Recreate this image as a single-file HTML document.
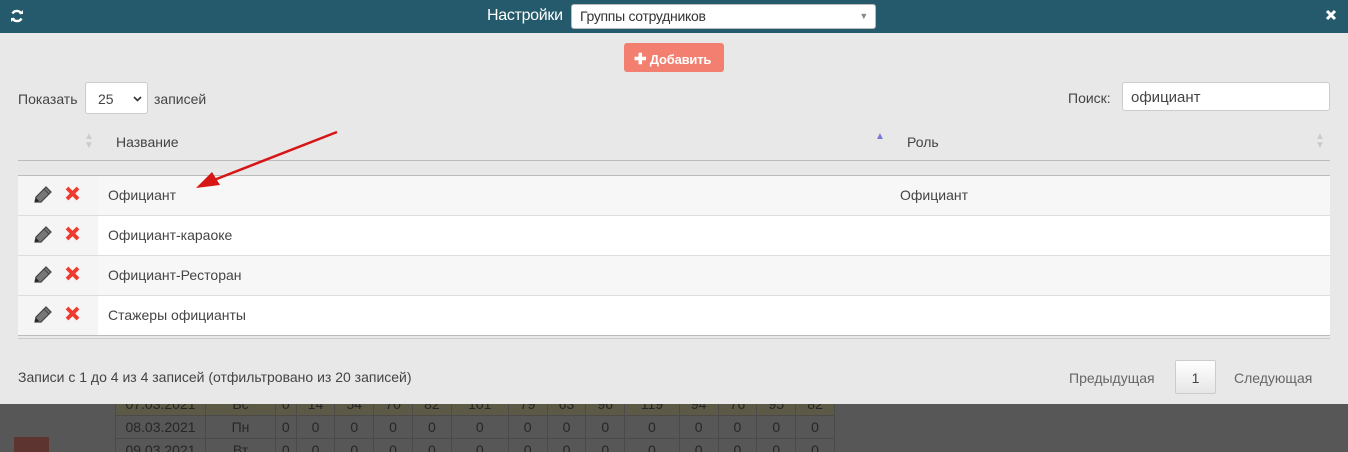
<!DOCTYPE html>
<html><head><meta charset="utf-8"><style>
*{box-sizing:border-box;margin:0;padding:0}
html,body{width:1348px;height:452px;overflow:hidden;background:#575757}
body{font-family:"Liberation Sans",Arial,sans-serif;font-size:14px;color:#444;position:relative}
.hdr{position:absolute;left:0;top:0;width:1348px;height:33px;background:#245a6b}
.modal{position:absolute;left:0;top:33px;width:1348px;height:371px;background:#e8e8e8}
.abs{position:absolute}
.tbl{position:absolute;left:18px;width:1312px}
.row{position:absolute;left:18px;width:1312px;height:40px;border-top:1px solid #ddd}
.row .c1{position:absolute;left:0;top:0;width:80px;height:39px;background:#f5f5f5}
.row span{position:absolute;top:11px;font-size:14px;color:#444}
.bg{border-collapse:collapse}
.bg td{border:1px solid #4a4a4a;color:#262626;text-align:center;font-size:14px;height:23px;background:#575757}
.bg tr.y td{background:#5c5946}
</style></head><body>
<div class="abs" style="left:0;top:404px;width:1348px;height:48px;background:#575757"></div>
<table class="bg abs" style="left:115px;top:392px;width:720px">
<tr class="y"><td style="width:90px">07.03.2021</td><td style="width:70px">Вс</td><td>0</td><td>14</td><td>54</td><td>70</td><td>82</td><td>101</td><td>79</td><td>63</td><td>96</td><td>119</td><td>94</td><td>76</td><td>95</td><td>82</td></tr>
<tr><td>08.03.2021</td><td>Пн</td><td>0</td><td>0</td><td>0</td><td>0</td><td>0</td><td>0</td><td>0</td><td>0</td><td>0</td><td>0</td><td>0</td><td>0</td><td>0</td><td>0</td></tr>
<tr><td>09.03.2021</td><td>Вт</td><td>0</td><td>0</td><td>0</td><td>0</td><td>0</td><td>0</td><td>0</td><td>0</td><td>0</td><td>0</td><td>0</td><td>0</td><td>0</td><td>0</td></tr>
</table>
<div class="abs" style="left:14px;top:437px;width:35px;height:20px;background:#5e3430"></div>

<div class="hdr">
 <svg class="abs" style="left:10px;top:9px" width="14" height="14" viewBox="0 0 14 14"><path d="M11.5 5A5 5 0 0 0 2.5 4.5M2.5 9A5 5 0 0 0 11.5 9.5" stroke="#fff" stroke-width="2.4" fill="none"/><path d="M9 5h4V1z M5 9H1v4z" fill="#fff"/></svg>
 <div class="abs" style="left:487px;top:7px;color:#fff;font-size:16px;letter-spacing:-0.3px">Настройки</div>
 <div class="abs" style="left:571px;top:4px;width:305px;height:25px;background:#fff;border:1px solid #bbb;border-radius:3px;font-size:14px;color:#333;padding:3px 0 0 8px;letter-spacing:-0.3px">Группы сотрудников<span class="abs" style="right:7px;top:6px;font-size:9px;color:#888">▼</span></div>
 <svg class="abs" style="left:1325px;top:9px" width="12" height="12" viewBox="0 0 12 12"><path d="M2 2L10 10M10 2L2 10" stroke="#fff" stroke-width="3"/></svg>
</div>

<div class="modal">
 <div class="abs" style="left:624px;top:10px;width:100px;height:29px;background:#f27f6f;border-radius:3px;color:#fff;font-size:13px;font-weight:bold;padding-top:7px;padding-left:10px;letter-spacing:-0.2px"><span style="font-size:15px">✚</span> Добавить</div>
 <div class="abs" style="left:18px;top:58px">Показать</div>
 <div class="abs" style="left:85px;top:49px;width:63px;height:32px;background:#fff;border:1px solid #ccc;border-radius:3px;padding:8px 0 0 12px">25<svg class="abs" style="left:47px;top:13px" width="9" height="6" viewBox="0 0 9 6"><path d="M1 1L4.5 4.5L8 1" stroke="#333" stroke-width="1.6" fill="none"/></svg></div>
 <div class="abs" style="left:154px;top:58px">записей</div>
 <div class="abs" style="left:1068px;top:57px">Поиск:</div>
 <div class="abs" style="left:1122px;top:49px;width:208px;height:29px;background:#fff;border:1px solid #ccc;border-radius:3px;padding:6px 0 0 8px;font-size:15px">официант</div>
</div>

<div class="abs" style="left:116px;top:134px;font-size:14px;color:#444">Название</div>
<div class="abs" style="left:907px;top:134px;font-size:14px;color:#444">Роль</div>
<div class="abs" style="left:84px;top:132px;font-size:10px;color:#ccc;line-height:9px">▲<br>▼</div>
<div class="abs" style="left:875px;top:131px;font-size:10px;color:#7777dd">▲</div>
<div class="abs" style="left:1315px;top:132px;font-size:10px;color:#ccc;line-height:9px">▲<br>▼</div>
<div class="tbl" style="top:160px;height:1px;background:#bbb"></div>
<div class="tbl" style="top:175px;height:1px;background:#bbb"></div>

<div class="row" style="top:176px;border-top:none;background:#f7f7f7"><div class="c1"></div><span style="left:90px">Официант</span><span style="left:882px">Официант</span></div>
<div class="row" style="top:215px;background:#fff"><div class="c1"></div><span style="left:90px">Официант-караоке</span></div>
<div class="row" style="top:255px;background:#f7f7f7"><div class="c1"></div><span style="left:90px">Официант-Ресторан</span></div>
<div class="row" style="top:295px;background:#fff;height:40px"><div class="c1"></div><span style="left:90px">Стажеры официанты</span></div>
<div class="tbl" style="top:335px;height:1px;background:#bbb"></div>
<div class="tbl" style="top:338px;height:1px;background:#ccc"></div>

<svg class="abs" style="left:33px;top:185px" width="20" height="140" viewBox="0 0 20 140">
 <g id="p"><path d="M2 17L3 12L13 2L18 7L8 17Z" fill="#777" stroke="#444" stroke-width="1.2"/><path d="M11 4L16 9" stroke="#444" stroke-width="1"/><path d="M2 17L3 13L6 16Z" fill="#222"/></g>
 <use href="#p" y="40"/><use href="#p" y="80"/><use href="#p" y="120"/>
</svg>
<svg class="abs" style="left:65px;top:186px" width="16" height="140" viewBox="0 0 16 140">
 <g id="x"><path d="M2 2L13 13M13 2L2 13" stroke="#ee3b2f" stroke-width="3.8"/></g>
 <use href="#x" y="40"/><use href="#x" y="80"/><use href="#x" y="120"/>
</svg>

<svg class="abs" style="left:190px;top:128px" width="155" height="65" viewBox="0 0 155 65">
 <path d="M147 4L24 52" stroke="#d81515" stroke-width="2.5"/>
 <path d="M6 60L22 44L30 57Z" fill="#d81515"/>
</svg>

<div class="abs" style="left:18px;top:369px">Записи с 1 до 4 из 4 записей (отфильтровано из 20 записей)</div>
<div class="abs" style="left:1069px;top:370px;color:#666">Предыдущая</div>
<div class="abs" style="left:1175px;top:360px;width:41px;height:34px;background:linear-gradient(#fff,#e6e6e6);border:1px solid #ccc;border-radius:2px;text-align:center;padding-top:9px">1</div>
<div class="abs" style="left:1234px;top:370px;color:#666">Следующая</div>
</body></html>
